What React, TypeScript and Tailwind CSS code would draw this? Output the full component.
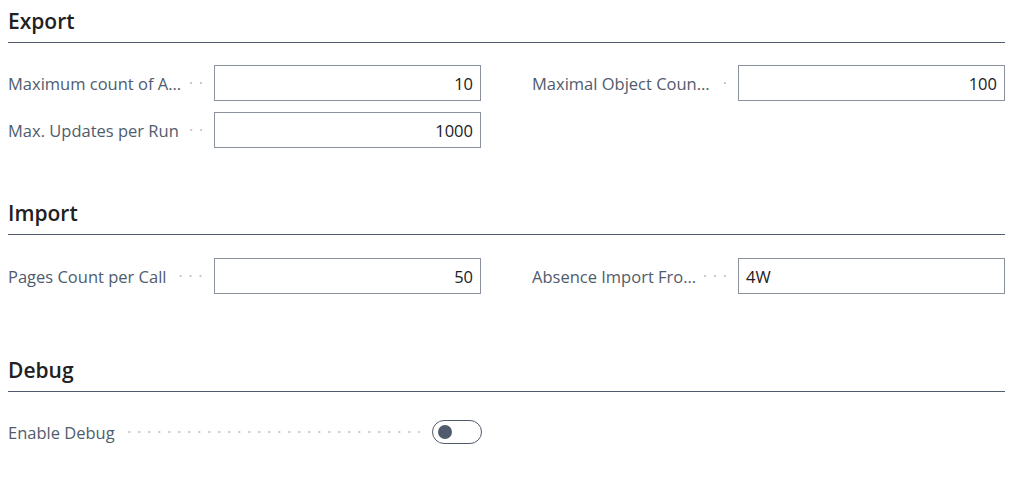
import React from "react";

const font = { fontFamily: '"Open Sans", "Noto Sans", sans-serif' };

function Heading({ title }: { title: string }) {
  return (
    <div className="pt-[7px] pb-[7px] border-b border-[#505c6d]">
      <h2 className="text-[21px] leading-[28px] font-semibold text-[#212121]">{title}</h2>
    </div>
  );
}

function Leader() {
  return (
    <div className="flex-1 h-[2px] ml-[8px] mr-[12px] bg-[linear-gradient(to_left,#c8c8c8_2px,transparent_2px)] bg-[length:10px_2px] bg-repeat-x bg-right" />
  );
}

function Field({ label, value, alignLeft }: { label: string; value: string; alignLeft?: boolean }) {
  return (
    <div className="flex items-center h-[36px]">
      <div className="w-[206px] flex items-center shrink-0">
        <span className="whitespace-nowrap text-[16.5px] text-[#505c6d] pt-[3px]">{label}</span>
        <Leader />
      </div>
      <div
        className={`flex-1 h-[36px] border border-[#8b919d] px-[7px] pt-[3px] flex items-center text-[16.5px] text-[#212121] ${
          alignLeft ? "justify-start" : "justify-end"
        }`}
      >
        {value}
      </div>
    </div>
  );
}

export default function App() {
  return (
    <div className="bg-white w-[1015px] h-[484px] pl-[8px] pr-[10px]" style={font}>
      <section>
        <Heading title="Export" />
        <div className="grid grid-cols-2 gap-x-[51px] gap-y-[11px] pt-[22px]">
          <Field label="Maximum count of A…" value="10" />
          <Field label="Maximal Object Coun…" value="100" />
          <Field label="Max. Updates per Run" value="1000" />
        </div>
      </section>

      <section className="mt-[44px]">
        <Heading title="Import" />
        <div className="grid grid-cols-2 gap-x-[51px] pt-[23px]">
          <Field label="Pages Count per Call" value="50" />
          <Field label="Absence Import Fro…" value="4W" alignLeft />
        </div>
      </section>

      <section className="mt-[55px]">
        <Heading title="Debug" />
        <div className="pt-[22px]">
          <div className="flex items-center h-[36px] w-[474px]">
            <span className="whitespace-nowrap text-[16.5px] text-[#505c6d] pt-[3px]">Enable Debug</span>
            <Leader />
            <div className="w-[50px] h-[24px] rounded-full border border-[#505c6d] flex items-center">
              <div className="w-[14px] h-[14px] rounded-full bg-[#505c6d] ml-[5px]" />
            </div>
          </div>
        </div>
      </section>
    </div>
  );
}
